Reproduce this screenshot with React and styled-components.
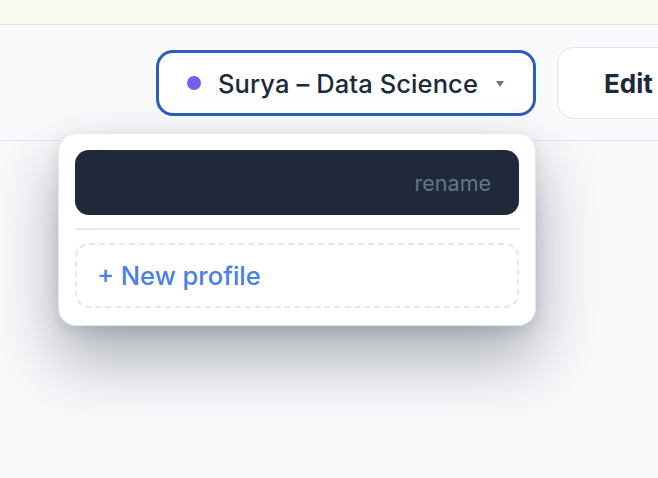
import React from "react";
import styled, { createGlobalStyle } from "styled-components";

const Global = createGlobalStyle`
  * { box-sizing: border-box; }
  html, body { margin: 0; padding: 0; }
  body {
    background: #f8f9fb;
    font-family: Inter, "Noto Sans", "Liberation Sans", sans-serif;
    min-height: 478px;
    overflow: hidden;
  }
`;

const Page = styled.div`
  width: 658px;
  height: 478px;
  background: #f8f9fb;
  overflow: hidden;
`;

const TopStrip = styled.div`
  height: 25px;
  background: #fafbf3;
  border-bottom: 1px solid #e4e5db;
`;

const Header = styled.header`
  height: 116px;
  background: #f8fafc;
  border-bottom: 1px solid #e2e8f0;
  display: flex;
  align-items: center;
  gap: 21px;
  padding-left: 156px;
  padding-top: 1px;
`;

const PickerWrap = styled.div`
  position: relative;
  flex-shrink: 0;
`;

const ProfileButton = styled.button`
  width: 380px;
  height: 66px;
  display: flex;
  align-items: center;
  gap: 17px;
  padding: 0 29px 0 28px;
  background: #ffffff;
  border: 3px solid #2a5dbd;
  border-radius: 17px;
  font-family: inherit;
  cursor: pointer;
`;

const Dot = styled.span`
  width: 14px;
  height: 14px;
  border-radius: 50%;
  background: linear-gradient(135deg, #5b6cf3, #8357ea);
  flex-shrink: 0;
`;

const ProfileName = styled.span`
  font-size: 25.5px;
  font-weight: 550;
  letter-spacing: 0.1px;
  color: #1e293b;
  white-space: nowrap;
`;

const Caret = styled.span`
  margin-left: auto;
  width: 0;
  height: 0;
  border-left: 4px solid transparent;
  border-right: 4px solid transparent;
  border-top: 6px solid #6b7280;
  margin-top: 2px;
`;

const EditButton = styled.button`
  flex-shrink: 0;
  width: 160px;
  height: 72px;
  padding: 0 0 0 46px;
  text-align: left;
  background: #ffffff;
  border: 1px solid #e0e6ee;
  border-radius: 17px;
  font-family: inherit;
  font-size: 26px;
  font-weight: 700;
  color: #1e293b;
`;

const Menu = styled.div`
  position: absolute;
  right: 0;
  top: calc(100% + 17px);
  width: 478px;
  background: #ffffff;
  border: 1px solid #e2e8f0;
  border-radius: 18px;
  padding: 16px 16px 17px;
  box-shadow: 0 32px 64px rgba(15, 23, 42, 0.34), 0 6px 16px rgba(15, 23, 42, 0.1);
  display: flex;
  flex-direction: column;
  z-index: 10;
`;

const ProfileRow = styled.div`
  height: 65px;
  border-radius: 14px;
  background: #1f2939;
  display: flex;
  align-items: center;
  justify-content: flex-end;
  padding-right: 28px;
`;

const RenameLabel = styled.span`
  font-size: 21.5px;
  color: #64748b;
`;

const Divider = styled.hr`
  border: none;
  height: 2px;
  background: #e5e9f0;
  margin: 13px 0 13px;
`;

const NewProfile = styled.button`
  height: 65px;
  border: 2px dashed #e2e8f0;
  border-radius: 14px;
  background: #ffffff;
  text-align: left;
  padding-left: 20px;
  font-family: inherit;
  font-size: 25.5px;
  font-weight: 450;
  color: #4680e8;
`;

export default function App() {
  return (
    <Page>
      <Global />
      <TopStrip />
      <Header>
        <PickerWrap>
          <ProfileButton>
            <Dot />
            <ProfileName>Surya – Data Science</ProfileName>
            <Caret />
          </ProfileButton>
          <Menu>
            <ProfileRow>
              <RenameLabel>rename</RenameLabel>
            </ProfileRow>
            <Divider />
            <NewProfile>+ New profile</NewProfile>
          </Menu>
        </PickerWrap>
        <EditButton>Edit</EditButton>
      </Header>
    </Page>
  );
}
